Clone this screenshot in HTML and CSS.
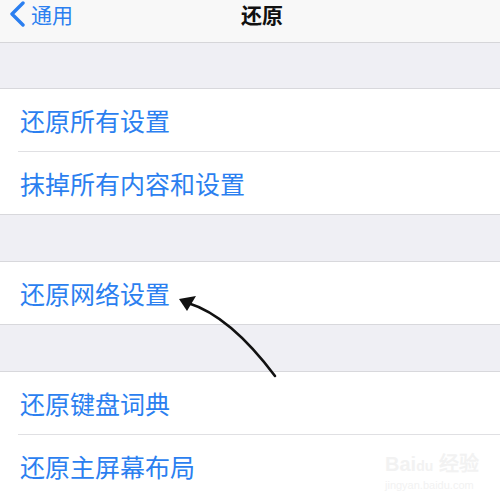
FILE: index.html
```html
<!DOCTYPE html>
<html lang="zh-CN">
<head>
  <meta charset="UTF-8" />
  <meta name="viewport" content="width=device-width, initial-scale=1.0"/>
  <title>还原</title>
  <link rel="stylesheet" href="styles.css">
</head>
<body>
  <div class="screen">
    <header class="nav-bar">
      <a class="back-link" href="#">
        <svg class="chevron" width="18" height="26" viewBox="0 0 18 26">
          <path d="M15 2 L4 13 L15 24" fill="none" stroke="#2b7ff0" stroke-width="3.4" stroke-linecap="round" stroke-linejoin="round"/>
        </svg>
        <span>通用</span>
      </a>
      <h1 class="nav-title">还原</h1>
    </header>

    <div class="group">
      <div class="row">还原所有设置</div>
      <div class="row">抹掉所有内容和设置</div>
    </div>

    <div class="group">
      <div class="row">还原网络设置</div>
    </div>

    <div class="group">
      <div class="row">还原键盘词典</div>
      <div class="row">还原主屏幕布局</div>
    </div>

    <!-- hand-drawn pointer -->
    <svg class="pointer" width="500" height="497" viewBox="0 0 500 497">
      <path d="M275 376 Q230 316 188 303" fill="none" stroke="#111" stroke-width="2.6" stroke-linecap="round"/>
      <polygon points="179,299 196,296 187,311" fill="#111"/>
    </svg>

    <div class="watermark">
      <span class="wm-logo">Bai<b>du</b> 经验</span>
      <span class="wm-url">jingyan.baidu.com</span>
    </div>
  </div>
</body>
</html>
```

FILE: styles.css
```css
body {
  margin: 0;
  background-color: #efeff4;
  font-family: "Noto Sans CJK SC", "Noto Sans", sans-serif;
}
.screen {
  position: relative;
  width: 500px;
  height: 497px;
  overflow: hidden;
  background-color: #efeff4;
}
.nav-bar {
  height: 42px;
  display: flex;
  align-items: center;
  justify-content: center;
  position: relative;
  background-color: #f8f8f8;
  border-bottom: 1px solid #d6d6d9;
  margin-bottom: 45px;
}
.back-link {
  position: absolute;
  left: 8px;
  top: 1px;
  display: flex;
  align-items: center;
  gap: 5px;
  color: #2b7ff0;
  text-decoration: none;
  font-size: 21px;
  line-height: 26px;
}
.chevron {
  display: block;
}
.nav-title {
  margin: 0 0 14px 24px;
  font-size: 21px;
  font-weight: 600;
  color: #111;
  line-height: 26px;
}
.group {
  background-color: #fff;
  border-top: 1px solid #d8d8dc;
  border-bottom: 1px solid #d8d8dc;
  margin-bottom: 46px;
}
.row {
  height: 62px;
  display: flex;
  align-items: center;
  padding-left: 20px;
  font-size: 25px;
  color: #2b7ff0;
  position: relative;
}
.row + .row {
  border-top: 1px solid #e0e0e3;
}
.row + .row::before {
  content: "";
  position: absolute;
  top: -1px;
  left: 0;
  width: 18px;
  height: 1px;
  background-color: #fff;
}
.pointer {
  position: absolute;
  left: 0;
  top: 0;
  pointer-events: none;
}
.watermark {
  position: absolute;
  left: 385px;
  top: 452px;
  display: flex;
  flex-direction: column;
  color: #f2f2f2;
  font-family: "Liberation Sans", sans-serif;
}
.wm-logo {
  font-size: 20px;
  font-weight: bold;
  line-height: 24px;
}
.wm-logo b {
  font-size: 14px;
}
.wm-url {
  font-size: 11px;
  line-height: 14px;
}
```
